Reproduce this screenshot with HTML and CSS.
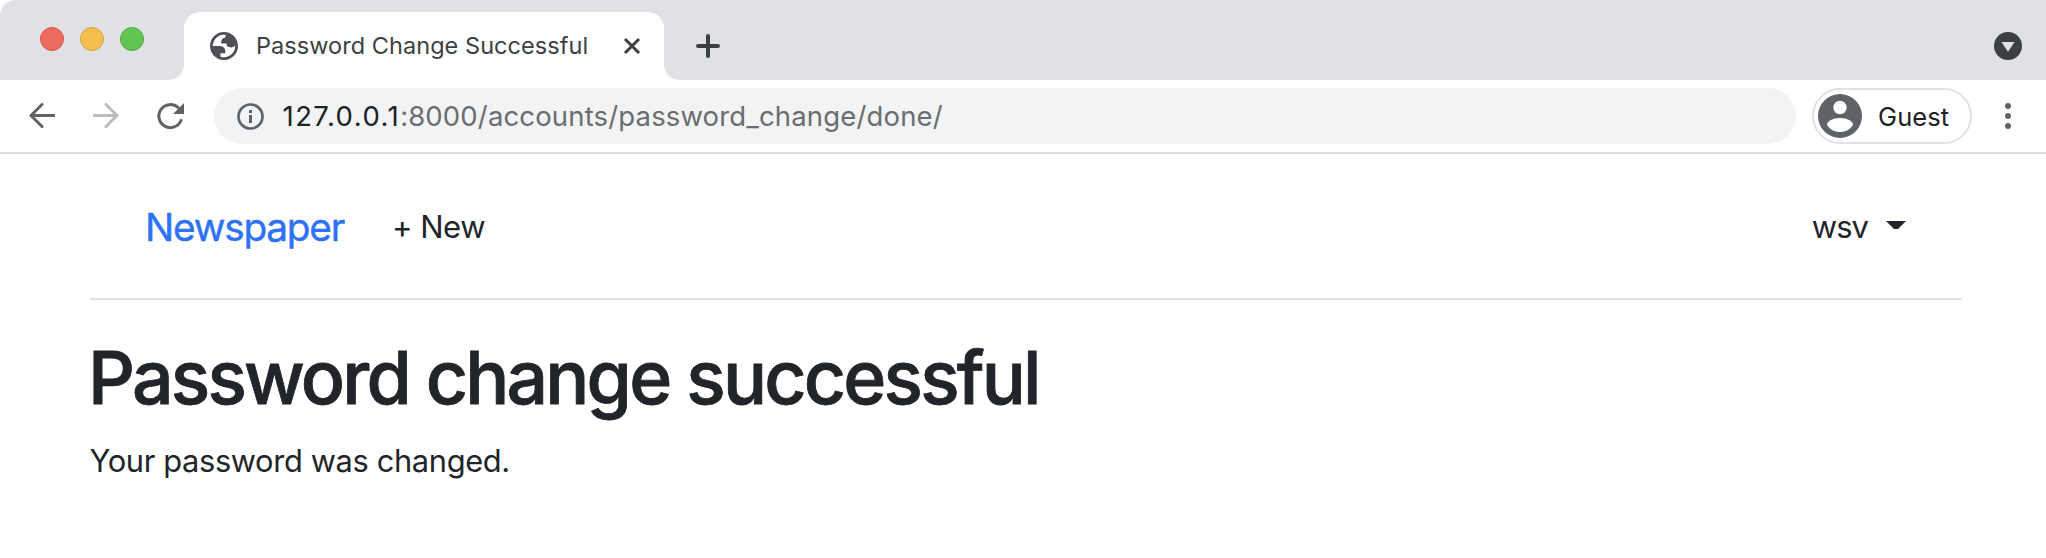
FILE: index.html
```html
<!DOCTYPE html>
<html lang="en">
<head>
<meta charset="utf-8">
<title>Password Change Successful</title>
<link rel="stylesheet" href="styles.css">
</head>
<body>
<div class="tabstrip">
  <div class="lights"><i class="light red"></i><i class="light yellow"></i><i class="light green"></i></div>
  <div class="tab">
    <svg class="globe" width="28" height="28" viewBox="2 2 20 20"><path fill="#4e5055" fill-rule="evenodd" d="M12 2C6.480 2 2 6.480 2 12s4.480 10 10 10 10-4.480 10-10S17.520 2 12 2zM4 12h4.400c3.407.022 4.922 1.730 4.543 5.127H9.488v2.470a8.004 8.004 0 0 0 10.498-8.080C19.327 12.500 18.332 13 17 13c-2.137 0-3.206-.916-3.206-2.750h-3.748c-.274-2.728.683-4.092 2.870-4.092 0-.975.327-1.597.811-1.970A8 8 0 0 0 4 12z"/></svg>
    <span class="tab-title">Password Change Successful</span>
    <svg class="close" width="18" height="18" viewBox="0 0 18 18"><path d="M2 2L16 16M16 2L2 16" stroke="#3c4043" stroke-width="3"/></svg>
  </div>
  <svg class="plus" width="24" height="24" viewBox="0 0 24 24"><path d="M12 2V22M2 12H22" stroke="#3c4043" stroke-width="4" stroke-linecap="round"/></svg>
  <svg class="tab-search" width="28" height="28" viewBox="0 0 28 28"><circle cx="14" cy="14" r="14" fill="#3c4043"/><path d="M7.500 10H20.500L14 19.700Z" fill="#dfe1e5"/></svg>
</div>
<div class="toolbar">
  <svg class="back" width="26" height="26" viewBox="0 0 26 26"><path d="M13 1.500L2 12.500L13 23.500M2 12.500H25" fill="none" stroke="#5f6368" stroke-width="3" stroke-linecap="round" stroke-linejoin="round"/></svg>
  <svg class="forward" width="26" height="26" viewBox="0 0 26 26"><path d="M13 1.500L24 12.500L13 23.500M24 12.500H1" fill="none" stroke="#babcbe" stroke-width="3" stroke-linecap="round" stroke-linejoin="round"/></svg>
  <svg class="reload" width="28" height="26" viewBox="0 0 28 26"><path d="M21 4.500A11.500 11.500 0 1 0 24 17.500" fill="none" stroke="#5f6368" stroke-width="3" stroke-linecap="round"/><path d="M27 0V11H16Z" fill="#5f6368"/></svg>
  <div class="omnibox">
    <svg width="28" height="28" viewBox="0 0 28 28"><circle cx="14.500" cy="14.500" r="12" fill="none" stroke="#5f6368" stroke-width="2.700"/><path d="M13 8h3v3h-3zM13 13h3v8h-3z" fill="#5f6368"/></svg>
    <span class="url"><span class="host">127.0.0.1</span><span class="path">:8000/accounts/password_change/done/</span></span>
  </div>
  <div class="profile">
    <svg width="44" height="44" viewBox="0 0 44 44"><circle cx="22" cy="22" r="22" fill="#5f6368"/><circle cx="22" cy="13.500" r="6.700" fill="#fff"/><path d="M9 31C9 27 15 24 22 24S35 27 35 31C32 35.500 27.500 38 22 38S12 35.500 9 31Z" fill="#fff"/></svg>
    <span class="guest">Guest</span>
  </div>
  <svg class="menu" width="6" height="26" viewBox="0 0 6 26"><g fill="#5f6368"><circle cx="3" cy="3" r="3"/><circle cx="3" cy="13" r="3"/><circle cx="3" cy="23" r="3"/></g></svg>
</div>
<div class="page">
  <header class="site-header">
    <a class="brand">Newspaper</a>
    <a class="new">+ New</a>
    <a class="user"><span class="username">wsv</span><svg class="caret" width="20" height="8" viewBox="0 0 20 8"><path d="M0 0H20L12 8H8Z" fill="#212529"/></svg></a>
  </header>
  <h1>Password change successful</h1>
  <p>Your password was changed.</p>
</div>
</body>
</html>
```
FILE: styles.css
```css
* { box-sizing: border-box; }
body { margin: 0; height: 558px; overflow: hidden; background: #fff; color: #212529; font-family: Inter, "Liberation Sans", sans-serif; }
svg { display: block; flex: none; }
.tabstrip { display: flex; height: 80px; background: #dfe1e5; border-top-left-radius: 16px; }
.lights { display: flex; gap: 16px; width: 184px; padding: 27px 0 0 40px; }
.light { width: 24px; height: 24px; border-radius: 50%; border: 1px solid; }
.red { background: #ec6a5e; border-color: #d4534a; }
.yellow { background: #f5bf4f; border-color: #d6a243; }
.green { background: #61c554; border-color: #50a73f; }
.tab { position: relative; display: flex; align-items: center; width: 480px; height: 68px; margin-top: 12px; padding: 0 23px 0 26px; border-radius: 16px 16px 0 0; background: #fff; }
.tab::before, .tab::after { content: ""; position: absolute; bottom: 0; width: 16px; height: 16px; }
.tab::before { left: -16px; background: radial-gradient(circle at 0 0, #dfe1e5 15.5px, #fff 16.5px); }
.tab::after { right: -16px; background: radial-gradient(circle at 100% 0, #dfe1e5 15.5px, #fff 16.5px); }
.tab-title { margin-left: 18px; font-size: 23.5px; line-height: 32px; letter-spacing: 0.05px; color: #3c4043; white-space: nowrap; }
.close { margin-left: auto; }
.plus { margin: 34px 0 0 32px; }
.tab-search { margin: 32px 24px 0 auto; }
.toolbar { display: flex; align-items: center; height: 74px; padding: 0 35px 0 29px; border-bottom: 2px solid #dadbdc; }
.forward { margin-left: 38px; }
.reload { margin-left: 38px; }
.omnibox { display: flex; align-items: center; width: 1582px; height: 56px; margin-left: 29px; padding-left: 22px; border-radius: 28px; background: #f1f3f4; }
.url { margin-left: 18.5px; font-size: 27.5px; white-space: nowrap; color: #6b6d6f; }
.host { color: #202124; letter-spacing: 1.45px; }
.path { letter-spacing: 0.15px; }
.profile { display: flex; align-items: center; width: 160px; height: 56px; margin-left: 16px; padding-left: 4px; border: 2px solid #e1e1e1; border-radius: 28px; }
.guest { margin-left: 16px; font-size: 25.5px; letter-spacing: 0.1px; color: #202124; }
.menu { margin-left: auto; }
.page { width: 1872px; margin-left: 90px; }
.site-header { display: flex; align-items: center; height: 146px; padding: 0 56px 0 55px; border-bottom: 2px solid #dee2e6; }
.brand { font-size: 38.8px; letter-spacing: -1.25px; color: #2d72f6; -webkit-text-stroke: 0.4px #2d72f6; }
.new { margin-left: 48px; padding-top: 1px; font-size: 31px; letter-spacing: -0.5px; }
.user { display: flex; align-items: center; gap: 18px; margin-left: auto; padding-top: 1px; font-size: 31px; }
.username { letter-spacing: -1px; }
.caret { margin-bottom: 4px; }
h1 { margin: 30px 0 0; font-size: 73.3px; font-weight: 500; line-height: 96px; letter-spacing: -2.8px; text-indent: -2px; -webkit-text-stroke: 0.8px #212529; }
p { margin: 11px 0 0; font-size: 30.8px; line-height: 48px; letter-spacing: -0.35px; text-indent: -0.5px; }
```
